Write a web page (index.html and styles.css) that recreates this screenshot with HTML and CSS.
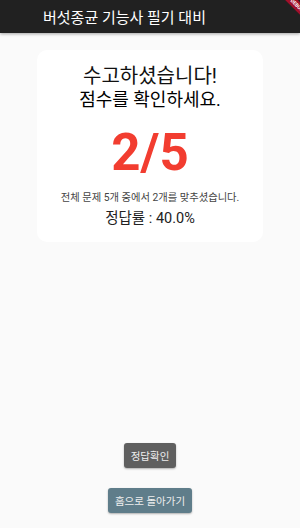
FILE: index.html
```html
<!DOCTYPE html>
<html>
<head>
  <title>버섯종균 기능사 필기 대비</title>
  <link rel="stylesheet" href="styles.css">
</head>
<body>
  <div class="app">
    <!-- Barre du haut -->
    <div class="appbar">
      <span class="appbar-title">버섯종균 기능사 필기 대비</span>
      <div class="debug-banner"><span>DEBUG</span></div>
    </div>

    <div class="content">
      <div class="card">
        <p class="title">수고하셨습니다!</p>
        <p class="subtitle">점수를 확인하세요.</p>
        <p class="score">2/5</p>
        <p class="detail">전체 문제 5개 중에서 2개를 맞추셨습니다.</p>
        <p class="rate">정답률 : 40.0%</p>
      </div>

      <div class="actions">
        <button class="btn btn-dark">정답확인</button>
        <button class="btn btn-blue">홈으로 돌아가기</button>
      </div>
    </div>
  </div>
</body>
</html>
```

FILE: styles.css
```css
body {
  margin: 0;
  font-family: Roboto, "Noto Sans CJK KR", sans-serif;
  background-color: #fafafa;
}

.app {
  width: 300px;
  height: 528px;
  display: flex;
  flex-direction: column;
  overflow: hidden;
}

.appbar {
  position: relative;
  height: 33px;
  background-color: #212121;
  display: flex;
  align-items: center;
  padding-left: 43px;
  box-shadow: 0 1px 3px rgba(0, 0, 0, 0.35);
  overflow: hidden;
  flex-shrink: 0;
}

.appbar-title {
  color: #fff;
  font-size: 15px;
}

/* Bandeau de debug dans le coin */
.debug-banner {
  position: absolute;
  top: 1px;
  right: -25px;
  width: 56px;
  height: 9px;
  background-color: #a0102a;
  transform: rotate(45deg);
  display: flex;
  justify-content: center;
  align-items: center;
}

.debug-banner span {
  color: #fff;
  font-size: 5px;
  font-weight: 700;
  line-height: 9px;
}

.content {
  flex: 1;
  display: flex;
  flex-direction: column;
  align-items: center;
}

.card {
  width: 226px;
  margin-top: 17px;
  padding: 14px 0;
  background-color: #fff;
  border-radius: 10px;
  text-align: center;
}

.card p {
  margin: 0;
}

.title {
  font-size: 20px;
  line-height: 24px;
  color: #111;
}

.subtitle {
  font-size: 18px;
  line-height: 24px;
  color: #000;
}

.score {
  margin-top: 11px !important;
  font-size: 51px;
  line-height: 60px;
  font-weight: 700;
  color: #f23d30;
}

.detail {
  margin-top: 8px !important;
  font-size: 10.3px;
  line-height: 14px;
  color: #444;
}

.rate {
  margin-top: 5px !important;
  font-size: 14.5px;
  line-height: 18px;
  color: #222;
}

.actions {
  margin-top: auto;
  margin-bottom: 15px;
  display: flex;
  flex-direction: column;
  align-items: center;
  gap: 20px;
}

.btn {
  height: 25px;
  padding: 0 7px;
  border: none;
  border-radius: 3px;
  color: #eee;
  font-family: Roboto, "Noto Sans CJK KR", sans-serif;
  font-size: 10.5px;
  box-shadow: 0 1px 2px rgba(0, 0, 0, 0.3);
}

.btn-dark {
  background-color: #5f5f5f;
}

.btn-blue {
  background-color: #5f7d8a;
}
```
